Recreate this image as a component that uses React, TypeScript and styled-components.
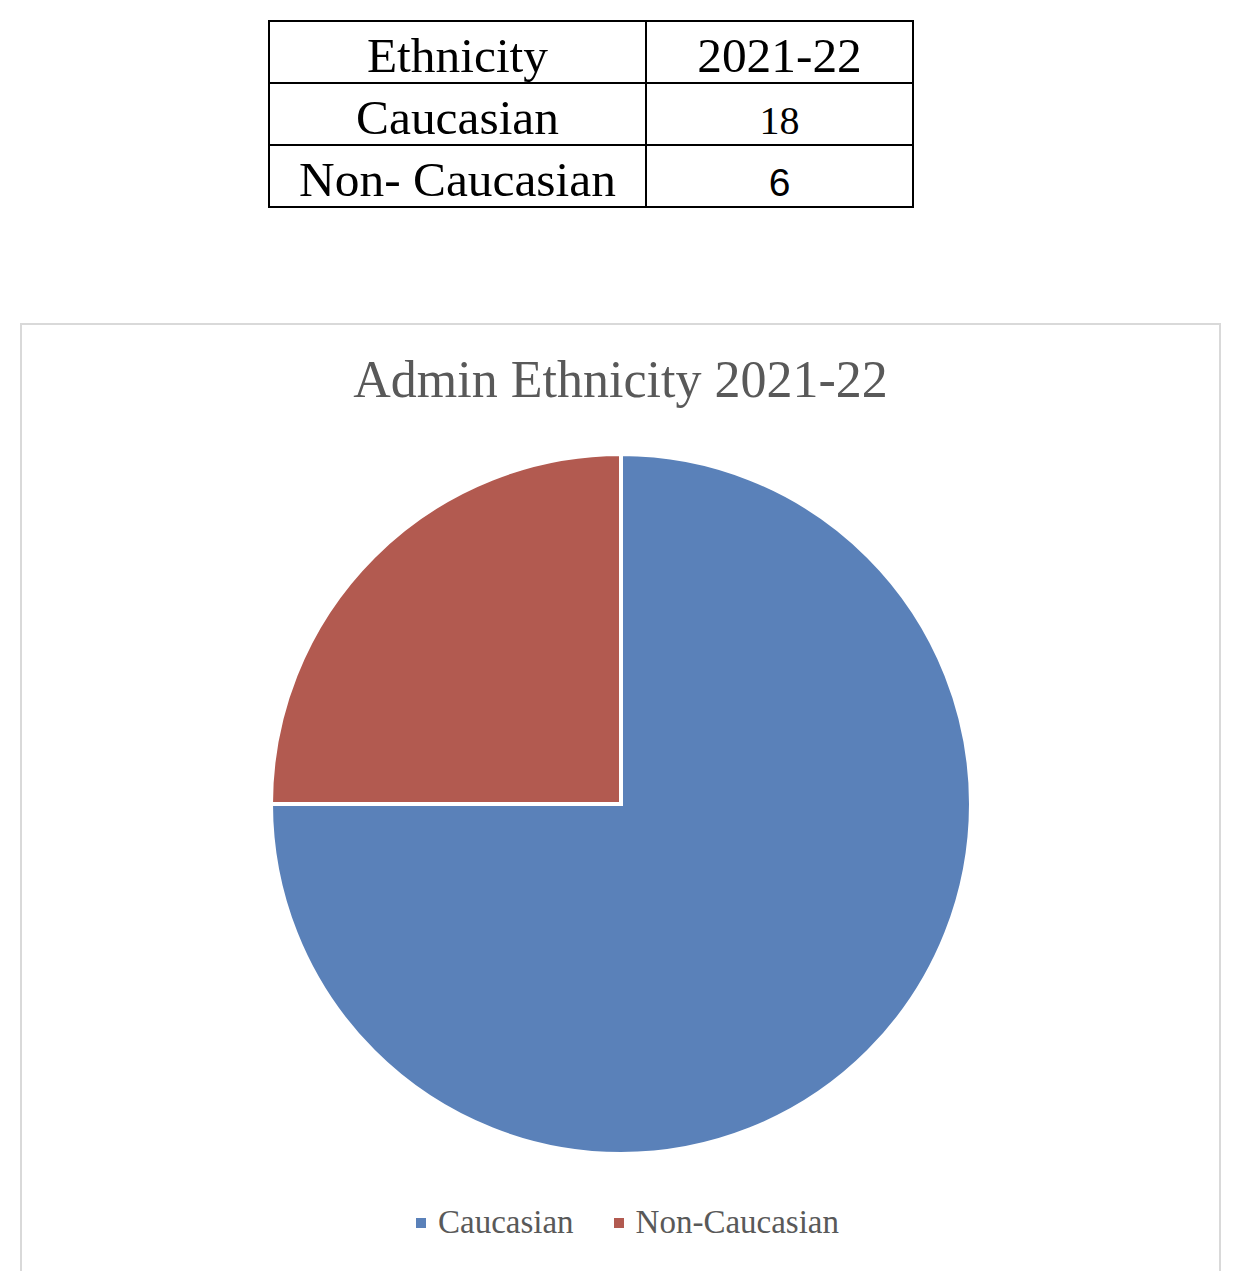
import React from "react";
import styled, { createGlobalStyle } from "styled-components";

const Global = createGlobalStyle`
  html, body { margin: 0; padding: 0; background: #ffffff; }
  body { font-family: "Liberation Serif", "Times New Roman", serif; }
`;

const Page = styled.div`
  width: 1246px;
  min-height: 1286px;
  padding-top: 20px;
  box-sizing: border-box;
`;

const Table = styled.table`
  margin-left: 268px;
  border-collapse: collapse;
  border: 2px solid #000;
  color: #000;
`;

const Cell = styled.td<{ $w: number }>`
  width: ${(p) => p.$w}px;
  height: 53px;
  padding: 7px 0 0;
  border: 2px solid #000;
  text-align: center;
  vertical-align: top;
  font-family: "Liberation Serif", "Times New Roman", serif;
  font-size: 49.4px;
  line-height: 53px;
  white-space: nowrap;
`;

const Num = styled.span<{ $sans?: boolean }>`
  font-family: ${(p) =>
    p.$sans ? '"Liberation Sans", Arial, sans-serif' : '"Liberation Serif", "Times New Roman", serif'};
  font-size: ${(p) => (p.$sans ? 39 : 40)}px;
  line-height: 1;
`;

const ChartBox = styled.section`
  margin: 115px 0 0 20px;
  width: 1201px;
  box-sizing: border-box;
  border: 2px solid #d9d9d9;
  border-bottom: none;
  display: flex;
  flex-direction: column;
  align-items: center;
  padding: 25px 0 29px;
`;

const Title = styled.h2`
  margin: 0;
  font-family: "Liberation Serif", "Times New Roman", serif;
  font-weight: normal;
  font-size: 52px;
  line-height: 60px;
  color: #595959;
`;

const PieSvg = styled.svg`
  display: block;
  margin-top: 44px;
  width: 700px;
  height: 700px;
`;

const Legend = styled.ul`
  list-style: none;
  margin: 48px 0 0;
  padding: 0 0 0 14px;
  display: flex;
  gap: 40px;
  font-family: "Liberation Serif", "Times New Roman", serif;
  font-size: 33px;
  line-height: 40px;
  color: #595959;
`;

const LegendItem = styled.li`
  display: flex;
  align-items: center;
  gap: 12px;
`;

const Swatch = styled.span<{ $color: string }>`
  width: 10px;
  height: 10px;
  background: ${(p) => p.$color};
  margin-top: 2px;
`;

const BLUE = "#5A81B9";
const RED = "#B25A50";

const rows: { label: string; value: React.ReactNode }[] = [
  { label: "Caucasian", value: <Num>18</Num> },
  { label: "Non- Caucasian", value: <Num $sans>6</Num> },
];

export default function App() {
  const c = 350;
  const r = 350;
  return (
    <>
      <Global />
      <Page>
        <Table>
          <tbody>
            <tr>
              <Cell $w={375}>Ethnicity</Cell>
              <Cell $w={265}>2021-22</Cell>
            </tr>
            {rows.map((row) => (
              <tr key={row.label}>
                <Cell $w={375}>{row.label}</Cell>
                <Cell $w={265}>{row.value}</Cell>
              </tr>
            ))}
          </tbody>
        </Table>

        <ChartBox>
          <Title>Admin Ethnicity 2021-22</Title>
          <PieSvg viewBox="0 0 700 700">
            <path
              d={`M${c},${c} L${c},${c - r} A${r},${r} 0 1 1 ${c - r},${c} Z`}
              fill={BLUE}
              stroke="#ffffff"
              strokeWidth={4}
              strokeLinejoin="miter"
            />
            <path
              d={`M${c},${c} L${c},${c - r} A${r},${r} 0 0 0 ${c - r},${c} Z`}
              fill={RED}
              stroke="#ffffff"
              strokeWidth={4}
              strokeLinejoin="miter"
            />
          </PieSvg>
          <Legend>
            <LegendItem>
              <Swatch $color={BLUE} />
              Caucasian
            </LegendItem>
            <LegendItem>
              <Swatch $color={RED} />
              Non-Caucasian
            </LegendItem>
          </Legend>
        </ChartBox>
      </Page>
    </>
  );
}
